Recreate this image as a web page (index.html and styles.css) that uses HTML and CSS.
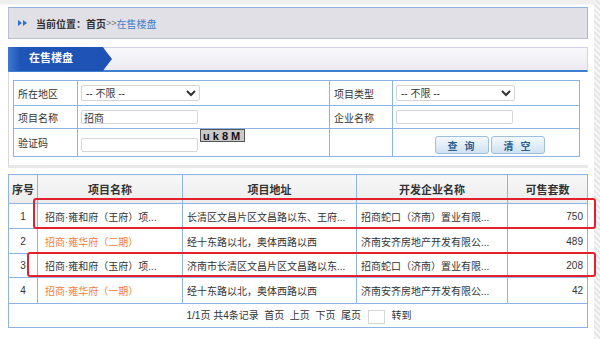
FILE: index.html
```html
<!DOCTYPE html>
<html lang="zh-CN">
<head>
    <meta charset="UTF-8">
    <title>在售楼盘</title>
    <link rel="stylesheet" href="styles.css">
</head>
<body>
    <div class="wrap">
        <div class="main">
            <div class="topline"></div>

            <div class="crumb">
                <span class="crumb-icon"><i></i><i></i></span>
                <span class="crumb-text">当前位置：首页</span><span class="crumb-sep">&gt;&gt;</span><a href="#" class="crumb-link">在售楼盘</a>
            </div>

            <div class="panel">
                <div class="panel-head">
                    <span class="tab">在售楼盘</span>
                </div>
                <div class="panel-body">
                    <table class="search">
                        <colgroup>
                            <col style="width:64px">
                            <col style="width:252px">
                            <col style="width:63px">
                            <col style="width:187px">
                        </colgroup>
                        <tr class="r1">
                            <td class="label">所在地区</td>
                            <td><select class="sel"><option>-- 不限 --</option></select></td>
                            <td class="label">项目类型</td>
                            <td><select class="sel"><option>-- 不限 --</option></select></td>
                        </tr>
                        <tr class="r2">
                            <td class="label">项目名称</td>
                            <td><input type="text" class="txt" value="招商"></td>
                            <td class="label">企业名称</td>
                            <td><input type="text" class="txt"></td>
                        </tr>
                        <tr class="r3">
                            <td class="label">验证码</td>
                            <td class="code-cell"><input type="text" class="txt"><span class="captcha">u k 8 M</span></td>
                            <td></td>
                            <td class="btn-cell"><button class="btn">查 询</button><button class="btn">清 空</button></td>
                        </tr>
                    </table>
                </div>
            </div>

            <table class="list">
                <colgroup>
                    <col style="width:29px">
                    <col style="width:145px">
                    <col style="width:174px">
                    <col style="width:151px">
                    <col style="width:80px">
                </colgroup>
                <thead>
                    <tr>
                        <th>序号</th>
                        <th>项目名称</th>
                        <th>项目地址</th>
                        <th>开发企业名称</th>
                        <th>可售套数</th>
                    </tr>
                </thead>
                <tbody>
                    <tr class="h25">
                        <td class="num">1</td>
                        <td class="name">招商·雍和府（王府）项...</td>
                        <td>长清区文昌片区文昌路以东、王府...</td>
                        <td>招商蛇口（济南）置业有限...</td>
                        <td class="count">750</td>
                    </tr>
                    <tr class="h25">
                        <td class="num">2</td>
                        <td class="name hot">招商·雍华府（二期）</td>
                        <td>经十东路以北，奥体西路以西</td>
                        <td>济南安齐房地产开发有限公...</td>
                        <td class="count">489</td>
                    </tr>
                    <tr class="h24">
                        <td class="num">3</td>
                        <td class="name">招商·雍和府（玉府）项...</td>
                        <td>济南市长清区文昌片区文昌路以东...</td>
                        <td>招商蛇口（济南）置业有限...</td>
                        <td class="count">208</td>
                    </tr>
                    <tr class="h26">
                        <td class="num">4</td>
                        <td class="name hot">招商·雍华府（一期）</td>
                        <td>经十东路以北，奥体西路以西</td>
                        <td>济南安齐房地产开发有限公...</td>
                        <td class="count">42</td>
                    </tr>
                    <tr class="pager">
                        <td colspan="5">
                            1/1页 共4条记录&nbsp; 首页&nbsp; 上页&nbsp; 下页&nbsp; 尾页 <input type="text" class="goto"> 转到
                        </td>
                    </tr>
                </tbody>
            </table>
        </div>
        <div class="scroll"></div>
    </div>

    <!-- annotation marks over rows 1 and 3 -->
    <div class="mark mark-1"></div>
    <div class="mark mark-3"></div>
</body>
</html>
```

FILE: styles.css
```css
:root {
    --line-blue: #8db4e4;
    --text-color: #333;
    --link-blue: #3f82c8;
    --hot: #f27c3c;
}

* {
    margin: 0;
    padding: 0;
    box-sizing: border-box;
}

body {
    font-family: "Liberation Sans", "Noto Sans CJK SC", sans-serif;
    font-size: 10px;
    color: var(--text-color);
    background: #fff;
    position: relative;
}

.wrap {
    display: flex;
    height: 339px;
}

.main {
    flex: 1;
    padding: 0 6px 0 8px;
}

.scroll {
    width: 7px;
    background: repeating-linear-gradient(45deg, #e6e6e6 0 2px, #f7f7f7 2px 4px);
}

.topline {
    height: 5px;
    margin: 0 -6px 2px -8px;
    background: #efefef;
    border-bottom: 1px solid #f7f7f7;
}

/* breadcrumb */
.crumb {
    height: 32px;
    display: flex;
    align-items: center;
    padding-left: 9px;
    background: #e1e0e6;
    border: 1px solid #bcbdd8;
    border-top-color: #8fb3e0;
    border-right-color: #9fb8e0;
}

.crumb-icon {
    display: flex;
    margin-right: 8px;
}

.crumb-icon i {
    width: 0;
    height: 0;
    border-top: 3px solid transparent;
    border-bottom: 3px solid transparent;
    border-left: 4px solid #2f6fc6;
    margin-right: 1px;
}

.crumb-text {
    color: #333;
    font-weight: bold;
}

.crumb-sep {
    color: #777;
    font-size: 9px;
}

.crumb-link {
    color: var(--link-blue);
    text-decoration: none;
}

/* panel */
.panel {
    margin-top: 8px;
    border-left: 1px solid #d8d8d8;
    border-bottom: 3px solid #e8e8e8;
}

.panel-head {
    height: 25px;
    background: linear-gradient(#f9f9fb, #ebeaf1);
    border: 1px solid #d2d3ea;
    border-bottom: 2px solid #3d7fd0;
    margin-left: -1px;
    position: relative;
}

.tab {
    position: absolute;
    left: -1px;
    top: -1px;
    height: 24px;
    width: 104px;
    padding-left: 21px;
    line-height: 23px;
    color: #fff;
    font-size: 11px;
    font-weight: bold;
    background: linear-gradient(90deg, #3f78cf, #1f55b8 12%, #1e52b4);
    clip-path: polygon(0 0, 95px 0, 97px 3px, 104px 12px, 97px 21px, 95px 24px, 0 24px);
}

.panel-body {
    padding: 8px 0 8px 4px;
}

.search {
    border-collapse: collapse;
    width: 566px;
    table-layout: fixed;
}

.search td {
    border: 1px solid var(--line-blue);
    padding: 0 3px;
    vertical-align: middle;
}

.search .label {
    padding-left: 4px;
}

.search .r1 td {
    height: 25px;
}

.search .r2 td {
    height: 23px;
}

.search .r3 td {
    height: 28px;
}

.sel {
    width: 119px;
    height: 16px;
    font-family: inherit;
    font-size: 10px;
    color: #333;
    border: 1px solid #d4d4d4;
    border-radius: 2px;
    background: #fff;
    display: block;
}

.txt {
    width: 117px;
    height: 14px;
    font-family: inherit;
    font-size: 10px;
    color: #333;
    border: 1px solid #d6d6d6;
    border-radius: 2px;
    padding: 0 2px;
    display: block;
}

.code-cell {
    position: relative;
}

.code-cell .txt {
    margin-top: 5px;
}

.captcha {
    position: absolute;
    left: 122px;
    top: 0;
    width: 45px;
    height: 13px;
    line-height: 12px;
    padding-left: 2px;
    background: #c9c9c9;
    border: 1px solid #555;
    font-family: "Liberation Sans", sans-serif;
    font-size: 11px;
    font-weight: bold;
    color: #111;
    white-space: pre;
}

.btn-cell {
    padding-left: 42px !important;
    padding-top: 5px !important;
}

.btn {
    width: 54px;
    height: 18px;
    margin-right: 2px;
    font-family: inherit;
    font-size: 10px;
    font-weight: bold;
    letter-spacing: 2px;
    color: #2d5f8e;
    background: linear-gradient(#f4f9fd, #cfe1f1);
    border: 1px solid #9dbfde;
    border-radius: 3px;
}

/* result list */
.list {
    margin-top: 6px;
    width: 579px;
    border-collapse: collapse;
    table-layout: fixed;
}

.list th,
.list td {
    border: 1px solid var(--line-blue);
    padding: 0 4px;
    white-space: nowrap;
    overflow: hidden;
}

.list th {
    height: 29px;
    font-size: 11px;
    font-weight: bold;
    color: #333;
    background: linear-gradient(#f7f7f7, #ececec);
}

.list th:first-child {
    padding: 0;
}

.list .h25 td { height: 25px; }
.list .h24 td { height: 24px; }
.list .h26 td { height: 26px; }

.list .num {
    text-align: center;
    padding: 0;
}

.list .name {
    padding-left: 7px;
}

.list .hot {
    color: var(--hot);
}

.list .count {
    text-align: right;
}

.list .pager td {
    height: 24px;
    text-align: center;
    padding-left: 6px;
}

.goto {
    width: 17px;
    height: 14px;
    border: 1px solid #d6d6d6;
    vertical-align: middle;
    margin: 0 4px;
}

/* red annotation boxes */
.mark {
    position: absolute;
    border: 2px solid #e3202c;
    border-radius: 3px;
}

.mark-1 {
    left: 33px;
    top: 198px;
    width: 563px;
    height: 31px;
}

.mark-3 {
    left: 27px;
    top: 252px;
    width: 569px;
    height: 25px;
}
```
